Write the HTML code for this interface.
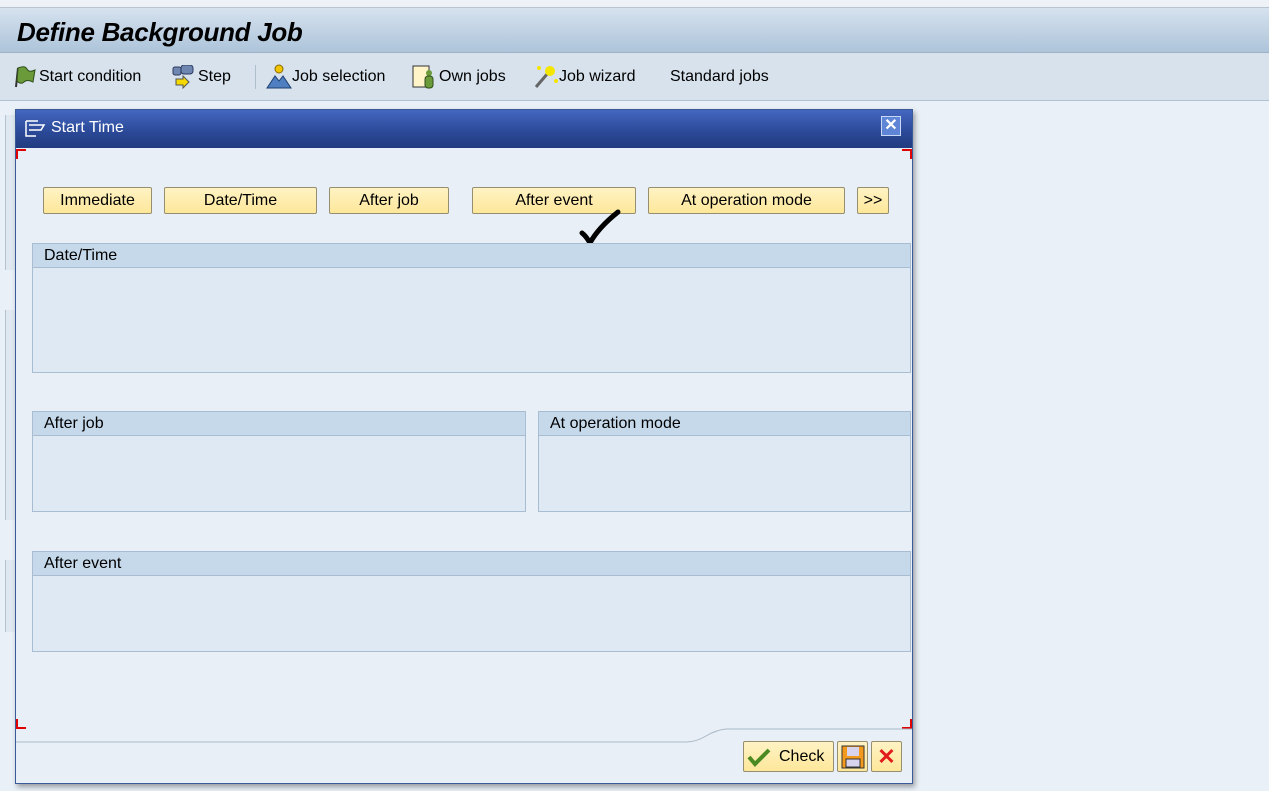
<!DOCTYPE html><html><head><style>
body{margin:0;width:1269px;height:791px;background:#e9f0f7;font-family:"Liberation Sans",sans-serif;position:relative;overflow:hidden;font-size:15px;color:#000}
.abs{position:absolute}
#top{left:0;top:0;width:1269px;height:7px;background:#eef2f6;border-bottom:1px solid #b8c4d0}
#title{left:0;top:8px;width:1269px;height:44px;background:linear-gradient(#d6e2ee,#adc4da);border-bottom:1px solid #9fb1c4}
#title span{position:absolute;left:17px;top:9px;font-size:26px;font-weight:bold;font-style:italic;letter-spacing:-0.3px}
#tb{left:0;top:53px;width:1269px;height:47px;background:#d7e2ec;border-bottom:1px solid #b3c2d0}
.ti{position:absolute;top:15px;font-size:16px}
#dlg{left:15px;top:109px;width:896px;height:673px;background:#e8eff6;border:1px solid #3a5a9a;box-shadow:2px 3px 5px rgba(0,0,0,.35)}
#dt{left:0;top:0;width:896px;height:38px;background:linear-gradient(#4467c0,#2a4896 60%,#223c80)}
.btn{position:absolute;top:77px;height:27px;background:linear-gradient(#fff3c4,#fde79a);border:1px solid #958f70;border-radius:2px;text-align:center;line-height:25px;font-size:16px;box-sizing:border-box}
.grp{position:absolute;border:1px solid #a9bdd2;background:#dfe9f3;box-sizing:border-box}
.grp div{height:23px;background:#c5d9ea;border-bottom:1px solid #a9bdd2;padding-left:11px;line-height:23px;font-size:16px}
.rc{position:absolute;width:8px;height:8px;border-color:#e00000;border-style:solid;border-width:0}
</style></head><body>
<div class="abs" id="top"></div>
<div class="abs" id="title"><span>Define Background Job</span></div>
<div class="abs" id="tb">
<svg class="abs" style="left:13px;top:12px" width="24" height="24"><path d="M3 22L5 3" stroke="#333" stroke-width="2"/><path d="M5 3Q12 0 14 4T22 5L20 17Q14 14 11 17T4 16Z" fill="#6a9a3a" stroke="#2f4f1a"/></svg>
<span class="ti" style="left:39px">Start condition</span>
<svg class="abs" style="left:172px;top:12px" width="24" height="24"><rect x="1" y="2" width="8" height="8" rx="2" fill="#6f86b0" stroke="#2d3b60"/><rect x="9" y="0" width="12" height="9" rx="3" fill="#6f86b0" stroke="#2d3b60"/><path d="M4 14h7v-3l6 6-6 6v-3H4z" fill="#f5d800" stroke="#555"/></svg>
<span class="ti" style="left:198px">Step</span>
<div class="abs" style="left:255px;top:12px;width:1px;height:24px;background:#b0bfcc"></div>
<svg class="abs" style="left:266px;top:10px" width="26" height="26"><circle cx="13" cy="6" r="4" fill="#f2c300" stroke="#8a6b00"/><path d="M1 25L9 13L13 18L17 13L25 25Z" fill="#4f7fc0" stroke="#1d3f70"/></svg>
<span class="ti" style="left:292px">Job selection</span>
<svg class="abs" style="left:412px;top:11px" width="26" height="26"><rect x="1" y="2" width="16" height="21" fill="#fff5c8" stroke="#333"/><circle cx="17" cy="9" r="3" fill="#6a9a3a"/><rect x="13" y="12" width="8" height="12" rx="3" fill="#6a9a3a" stroke="#2f4f1a"/></svg>
<span class="ti" style="left:439px">Own jobs</span>
<svg class="abs" style="left:533px;top:10px" width="26" height="26"><path d="M3 24L15 10" stroke="#666" stroke-width="3"/><circle cx="17" cy="8" r="5" fill="#f5e600"/><circle cx="6" cy="5" r="2" fill="#f5e600"/><circle cx="23" cy="18" r="2" fill="#f5e600"/></svg>
<span class="ti" style="left:559px">Job wizard</span>
<span class="ti" style="left:670px">Standard jobs</span>
</div>
<div class="abs" style="left:5px;top:115px;width:12px;height:155px;border-left:1px solid #b3c2d0;background:#dfe8f1"></div>
<div class="abs" style="left:5px;top:310px;width:12px;height:210px;border-left:1px solid #b3c2d0;background:#dfe8f1"></div>
<div class="abs" style="left:5px;top:560px;width:12px;height:72px;border-left:1px solid #b3c2d0;background:#dfe8f1"></div>
<div class="abs" id="dlg">
<div class="abs" id="dt">
<svg class="abs" style="left:9px;top:10px" width="22" height="18"><path d="M1 1h12M1 1v15h10M4 5h15l-3 5H4" fill="none" stroke="#fff" stroke-width="1.5"/></svg>
<span class="abs" style="left:35px;top:9px;color:#fff;font-size:16px">Start Time</span>
<div class="abs" style="left:865px;top:6px;width:20px;height:20px;background:#5f86d6;border:1px solid #c8d8f5;box-sizing:border-box;color:#fff;text-align:center;line-height:18px;font-weight:bold;font-size:16px">✕</div>
</div>
<div class="rc" style="left:0;top:39px;border-top-width:2px;border-left-width:2px"></div>
<div class="rc" style="right:0;top:39px;border-top-width:2px;border-right-width:2px"></div>
<div class="rc" style="left:0;top:609px;border-bottom-width:2px;border-left-width:2px"></div>
<div class="rc" style="right:0;top:609px;border-bottom-width:2px;border-right-width:2px"></div>
<div class="btn" style="left:27px;width:109px">Immediate</div>
<div class="btn" style="left:148px;width:153px">Date/Time</div>
<div class="btn" style="left:313px;width:120px">After job</div>
<div class="btn" style="left:456px;width:164px">After event</div>
<div class="btn" style="left:632px;width:197px">At operation mode</div>
<div class="btn" style="left:841px;width:32px">&gt;&gt;</div>
<svg class="abs" style="left:560px;top:98px" width="50" height="40"><path d="M6 25Q10 28 14 35Q22 20 42 4" fill="none" stroke="#000" stroke-width="5" stroke-linecap="round"/></svg>
<div class="grp" style="left:16px;top:133px;width:879px;height:130px"><div>Date/Time</div></div>
<div class="grp" style="left:16px;top:301px;width:494px;height:101px"><div>After job</div></div>
<div class="grp" style="left:522px;top:301px;width:373px;height:101px"><div>At operation mode</div></div>
<div class="grp" style="left:16px;top:441px;width:879px;height:101px"><div>After event</div></div>
<svg class="abs" style="left:0;top:615px" width="896" height="20"><path d="M0 17H670Q680 17 690 11T710 4H896" fill="none" stroke="#a9b8c6"/></svg>
<div class="btn" style="left:727px;top:631px;width:91px;height:31px;line-height:29px;text-align:left;padding-left:35px">Check
<svg class="abs" style="left:3px;top:5px" width="24" height="20"><path d="M2 10L8 17L22 3" fill="none" stroke="#4a8a20" stroke-width="4"/></svg></div>
<div class="btn" style="left:821px;top:631px;width:31px;height:31px">
<svg width="26" height="26" style="margin-top:2px"><rect x="2" y="2" width="22" height="22" fill="#f39a1c" stroke="#333"/><rect x="7" y="3" width="12" height="9" fill="#d8d4ee"/><rect x="6" y="15" width="14" height="8" fill="#d8d4ee" stroke="#333"/></svg></div>
<div class="btn" style="left:855px;top:631px;width:31px;height:31px;color:#e21b1b;font-weight:bold;font-size:22px;line-height:29px">✕</div>
</div>
</body></html>
